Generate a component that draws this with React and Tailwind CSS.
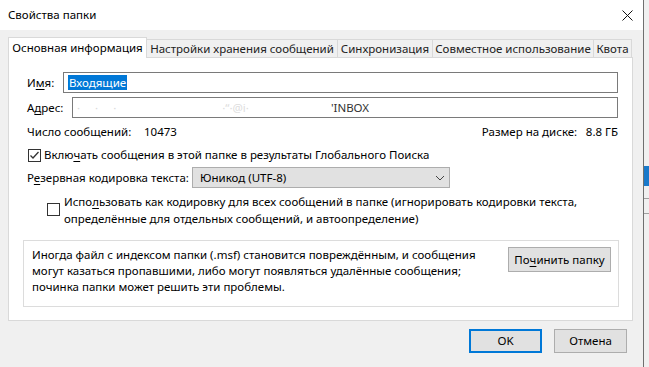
import React from "react";

const TABS = [
  { label: "Основная информация", w: "w-[139px]", active: true },
  { label: "Настройки хранения сообщений", w: "w-[191px]" },
  { label: "Синхронизация", w: "w-[95px]" },
  { label: "Совместное использование", w: "w-[161px]" },
  { label: "Квота", w: "w-[38px]" },
];

function U({ children }) {
  return <span className="underline underline-offset-[2px]">{children}</span>;
}

function Check({ checked }) {
  return (
    <span className="w-[13px] h-[13px] border border-[#333] bg-white flex items-center justify-center shrink-0">
      {checked && (
        <svg width="11" height="11" viewBox="0 0 11 11" fill="none" stroke="#333" strokeWidth="1.3">
          <polyline points="1.5,5.5 4,8 9.5,2" />
        </svg>
      )}
    </span>
  );
}

function Btn({ children, w, primary }) {
  return (
    <div
      className={
        "h-[24px] flex items-center justify-center bg-[#e1e1e1] " +
        w +
        (primary ? " border-2 border-[#0078d7]" : " border border-[#adadad]")
      }
    >
      {children}
    </div>
  );
}

export default function App() {
  return (
    <div className="w-[649px] h-[367px] flex bg-[#f0f0f0] overflow-hidden whitespace-nowrap font-['Noto_Sans',sans-serif] text-[11.5px] text-black leading-none">
      {/* ---------- DIALOG ---------- */}
      <div className="w-[644px] h-full flex flex-col border-r border-[#6f6f6f] bg-[#f0f0f0]">
        <div className="h-[30px] bg-white flex items-center justify-between pl-[8px] pr-[10px] shrink-0">
          <span>Свойства папки</span>
          <svg width="11" height="11" viewBox="0 0 11 11" stroke="#111" strokeWidth="1">
            <path d="M0.5 0.5L10.5 10.5M10.5 0.5L0.5 10.5" />
          </svg>
        </div>

        <div className="pl-[8px] pt-[7px]">
          {/* tabs */}
          <div className="flex items-end h-[20px]">
            {TABS.map((t) =>
              t.active ? (
                <div
                  key={t.label}
                  className={t.w + " h-[21px] bg-white border border-b-0 border-[#d9d9d9] flex items-center justify-center -mb-px relative z-10"}
                >
                  {t.label}
                </div>
              ) : (
                <div
                  key={t.label}
                  className={t.w + " h-[18px] bg-[#f0f0f0] border border-l-0 border-b-0 border-[#d9d9d9] flex items-center justify-center text-[#222]"}
                >
                  {t.label}
                </div>
              )
            )}
          </div>

          {/* panel */}
          <div className="w-[625px] h-[264px] bg-white border border-[#d9d9d9] flex flex-col pl-[18px] pr-[14px]">
            <div className="flex items-center mt-[14px] h-[21px]">
              <span className="w-[36px]">
                И<U>м</U>я:
              </span>
              <div className="flex-1 h-[21px] border border-[#7a7a7a] flex items-center pl-[4px]">
                <span className="bg-[#0078d7] text-white px-px h-[15px] flex items-center">Входящие</span>
              </div>
            </div>
            <div className="flex items-center mt-[4px] h-[21px]">
              <span className="w-[45px]">
                А<U>д</U>рес:
              </span>
              <div className="flex-1 h-[21px] border border-[#7a7a7a] flex items-center pl-[4px] text-[#333]">
                <span className="text-[#dadada] tracking-[6px]">·  ·    ·</span>
                <span className="ml-[100px] text-[#dddddd]">·“·@i·</span>
                <span className="ml-[82px]">'INBOX</span>
              </div>
            </div>

            <div className="flex items-center justify-between mt-[7px] h-[14px]">
              <div className="flex">
                <span className="w-[117px]">Число сообщений:</span>
                <span>10473</span>
              </div>
              <div className="flex">
                <span className="w-[104px]">Размер на диске:</span>
                <span>8.8 ГБ</span>
              </div>
            </div>

            <div className="flex items-center gap-[3px] mt-[9px] ml-[1px] h-[14px]">
              <Check checked />
              <span>
                Вклю<U>ч</U>ать сообщения в этой папке в результаты Глобального Поиска
              </span>
            </div>

            <div className="flex items-center mt-[5px] h-[21px]">
              <span className="w-[165px]">
                Р<U>е</U>зервная кодировка текста:
              </span>
              <div className="w-[258px] h-[21px] bg-[#e1e1e1] border border-[#adadad] flex items-center justify-between pl-[7px] pr-[4px]">
                <span>Юникод (UTF-8)</span>
                <svg width="10" height="6" viewBox="0 0 10 6" fill="none" stroke="#444" strokeWidth="1">
                  <polyline points="1,1 5,5 9,1" />
                </svg>
              </div>
            </div>

            <div className="flex items-start gap-[4px] mt-[6px] ml-[20px]">
              <span className="mt-[9px]">
                <Check />
              </span>
              <div className="flex flex-col gap-[1px] leading-[16px]">
                <span>
                  Испо<U>л</U>ьзовать как кодировку для всех сообщений в папке (игнорировать кодировки текста,
                </span>
                <span>определённые для отдельных сообщений, и автоопределение)</span>
              </div>
            </div>

            <div className="mt-[13px] -ml-[4px] w-[596px] h-[67px] border border-[#dcdcdc] flex justify-between pl-[8px] pr-[7px]">
              <div className="flex flex-col pt-[6px] leading-[16px]">
                <span>Иногда файл с индексом папки (.msf) становится повреждённым, и сообщения</span>
                <span>могут казаться пропавшими, либо могут появляться удалённые сообщения;</span>
                <span>починка папки может решить эти проблемы.</span>
              </div>
              <div className="pt-[6px]">
                <Btn w="w-[103px] h-[25px]">
                  По<U>ч</U>инить папку
                </Btn>
              </div>
            </div>
          </div>

          {/* buttons */}
          <div className="flex justify-end gap-[12px] mt-[8px] pr-[16px]">
            <Btn w="w-[73px]" primary>
              OK
            </Btn>
            <Btn w="w-[73px]">Отмена</Btn>
          </div>
        </div>
      </div>

      {/* ---------- BACKGROUND WINDOW EDGE ---------- */}
      <div className="flex-1 flex flex-col bg-[#f0f0f0]">
        <div className="h-[166px]" />
        <div className="h-[20px] bg-[#1979ca]" />
        <div className="h-[12px]" />
        <div className="h-px bg-[#a0a0a0]" />
        <div className="h-[14px]" />
        <div className="h-px bg-[#a0a0a0]" />
      </div>
    </div>
  );
}
